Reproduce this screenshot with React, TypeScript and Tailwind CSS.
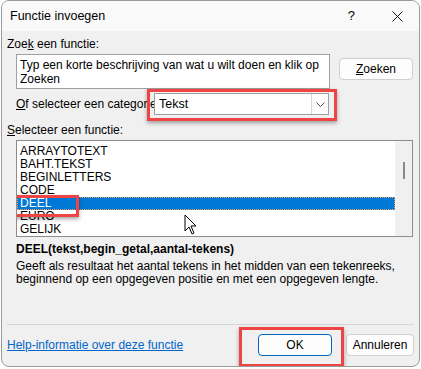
import React from 'react';

const functions = ['ARRAYTOTEXT', 'BAHT.TEKST', 'BEGINLETTERS', 'CODE', 'DEEL', 'EURO', 'GELIJK'];

const Cursor = () => (
  <svg width="14" height="21" viewBox="0 0 14 21" className="absolute left-[184px] top-[214px]">
    <path d="M1 1 L1 17 L5 13 L8 20 L10 19 L7 12 L12 12 Z" fill="#fff" stroke="#000" strokeWidth="1" strokeLinejoin="round" />
  </svg>
);

export default function App() {
  return (
    <div className="relative w-[421px] h-[369px] bg-white overflow-hidden font-['Liberation_Sans',Arial,sans-serif] text-[12px] text-black">
      <div className="ml-[1px] w-[419px] h-[367px] border border-[#9a9a9a] rounded-lg overflow-hidden flex flex-col bg-[#f0f0f0]">
        {/* title bar */}
        <div className="h-[30px] shrink-0 bg-[#f9f9f9] flex items-center pl-[8px]">
          <span className="text-[12.5px]">Functie invoegen</span>
          <span className="ml-auto text-[13px] mr-[37px]">?</span>
          <svg width="11" height="11" viewBox="0 0 11 11" className="mr-[16px]">
            <path d="M0.5 0.5 L10.5 10.5 M10.5 0.5 L0.5 10.5" stroke="#111" strokeWidth="1" />
          </svg>
        </div>

        <div className="flex-1 flex flex-col pl-[5px] pr-[5px]">
          <div className="mt-[6px] leading-[14px]">
            Zoe<span className="underline">k</span> een functie:
          </div>

          <div className="mt-[3px] flex items-start">
            <div className="ml-[9px] w-[314px] h-[35px] bg-white border border-[#a0a0a0] px-[3px] pt-[3px] leading-[14px]">
              Typ een korte beschrijving van wat u wilt doen en klik op Zoeken
            </div>
            <button className="ml-[9px] mt-[4px] w-[74px] h-[22px] bg-[#fdfdfd] border border-[#d0d0d0] rounded-[4px] leading-[14px]">
              <span className="underline">Z</span>oeken
            </button>
          </div>

          <div className="mt-[4px] flex items-center">
            <span className="ml-[9px] w-[138px] shrink-0 whitespace-nowrap">
              <span className="underline">O</span>f selecteer een categorie:
            </span>
            <div className="relative w-[175px] h-[22px] bg-white border border-[#a0a0a0] flex items-center">
              <span className="pl-[4px] text-[12.5px]">Tekst</span>
              <div className="ml-auto w-[17px] h-full border-l border-[#d8d8d8] flex items-center justify-center">
                <svg width="9" height="5" viewBox="0 0 9 5">
                  <path d="M0.5 0.5 L4.5 4.5 L8.5 0.5" stroke="#555" fill="none" strokeWidth="1" />
                </svg>
              </div>
              <div className="absolute -left-[8px] -top-[5px] w-[190px] h-[32px] border-[3px] border-[#ee4444] shadow-[0_2px_4px_rgba(0,0,0,0.35)]" />
            </div>
          </div>

          <div className="mt-[8px] leading-[14px]">
            <span className="underline">S</span>electeer een functie:
          </div>

          <div className="mt-[3px] ml-[9px] w-[397px] h-[97px] bg-white border border-[#8c8c8c] flex">
            <div className="flex-1 pt-[4px] overflow-hidden">
              {functions.map((f) =>
                f === 'DEEL' ? (
                  <div key={f} className="relative h-[13px] leading-[13px] bg-[#0078d7] text-white pl-[2px] border border-dotted border-[#f0a050]">
                    <span className="relative -top-[1px]">{f}</span>
                    <div className="absolute -left-[13px] -top-[3px] w-[74px] h-[22px] border-[3px] border-[#ee4444] shadow-[0_2px_4px_rgba(0,0,0,0.35)]" />
                  </div>
                ) : (
                  <div key={f} className="h-[13px] leading-[13px] pl-[3px]">{f}</div>
                ),
              )}
            </div>
            <div className="w-[17px] bg-[#f0f0f0] flex justify-center pt-[21px]">
              <div className="w-[2px] h-[17px] bg-[#888]" />
            </div>
          </div>

          <div className="mt-[5px] ml-[9px] leading-[14px] font-bold">DEEL(tekst,begin_getal,aantal-tekens)</div>
          <div className="mt-[4px] ml-[9px] leading-[13px]">
            Geeft als resultaat het aantal tekens in het midden van een tekenreeks,
            <br />
            beginnend op een opgegeven positie en met een opgegeven lengte.
          </div>

          <div className="mt-auto border-t border-[#d6d6d6]" />
          <div className="h-[41px] flex items-center pb-[1px]">
            <a className="text-[#0066cc] underline cursor-pointer">Help-informatie over deze functie</a>
            <div className="relative ml-auto">
              <button className="w-[74px] h-[22px] bg-[#fdfdfd] border border-[#0067c0] rounded-[4px]">OK</button>
              <div className="absolute -left-[19px] -top-[7px] w-[105px] h-[40px] border-[3px] border-[#ee4444] shadow-[0_2px_4px_rgba(0,0,0,0.35)]" />
            </div>
            <button className="ml-[14px] w-[68px] h-[22px] bg-[#fdfdfd] border border-[#d0d0d0] rounded-[4px]">Annuleren</button>
          </div>
        </div>
      </div>
      <Cursor />
    </div>
  );
}
